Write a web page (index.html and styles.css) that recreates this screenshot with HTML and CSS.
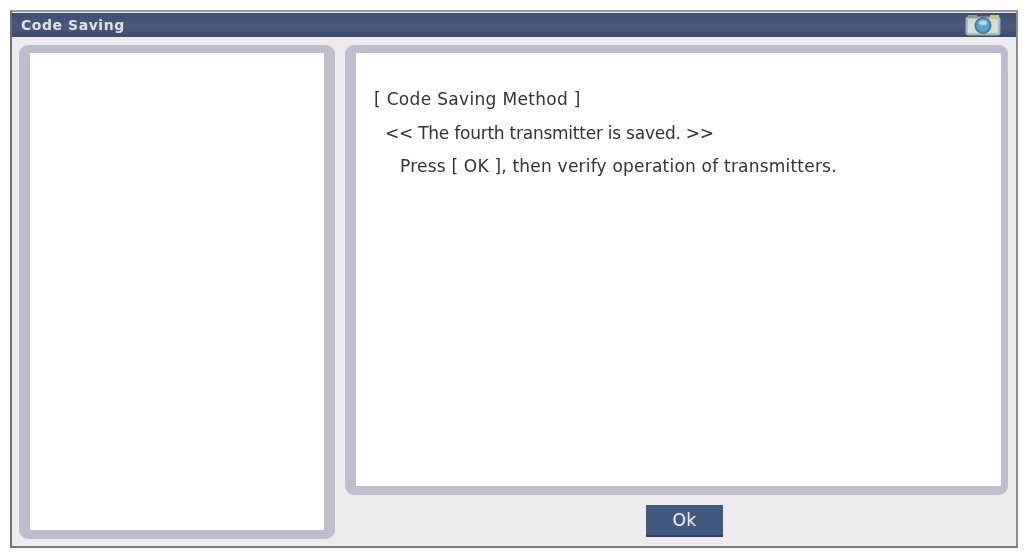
FILE: index.html
```html
<!DOCTYPE html>
<html lang="en">
<head>
<meta charset="utf-8">
<title>Code Saving</title>
<link rel="stylesheet" href="styles.css">
</head>
<body>
<div class="window">
  <header class="titlebar">
    <span class="title">Code Saving</span>
    <svg class="camera" width="36" height="22" viewBox="0 0 36 22" aria-hidden="true">
      <rect x="1" y="3" width="34" height="18" rx="2" fill="#aebfc0" stroke="#9aa8b8"/>
      <rect x="3" y="1" width="9" height="3" fill="#8c9c98"/>
      <rect x="25" y="1" width="9" height="3" fill="#c9c96a"/>
      <rect x="3" y="5" width="30" height="14" rx="1" fill="#cfe0d8"/>
      <circle cx="18" cy="11.5" r="8" fill="#5d7f9c" stroke="#56677f"/>
      <circle cx="18" cy="11.5" r="6.5" fill="#56a6d2"/>
      <ellipse cx="18" cy="9" rx="4" ry="2.4" fill="#a9d8ec"/>
    </svg>
  </header>
  <div class="content">
    <section class="panel panel-left"></section>
    <div class="right">
      <section class="panel panel-right">
        <p class="line line-1">[ Code Saving Method ]</p>
        <p class="line line-2">&lt;&lt; The fourth transmitter is saved. &gt;&gt;</p>
        <p class="line line-3">Press [ OK ], then verify operation of transmitters.</p>
      </section>
      <div class="actions">
        <button class="ok" type="button">Ok</button>
      </div>
    </div>
  </div>
</div>
</body>
</html>
```

FILE: styles.css
```css
* {
  box-sizing: border-box;
}

html,
body {
  margin: 0;
  height: 100%;
  background: #fff;
  overflow: hidden;
}

body {
  padding: 10px;
  font-family: "DejaVu Sans", "Liberation Sans", sans-serif;
}

.window {
  width: 1008px;
  height: 538px;
  display: flex;
  flex-direction: column;
  background: #edebed;
  border: 2px solid #8a8a8c;
  border-left-color: #6e6e70;
  border-top-color: #9a9a9c;
  border-bottom-color: #77777a;
}

.titlebar {
  height: 24px;
  margin-top: 1px;
  flex: none;
  display: flex;
  align-items: center;
  justify-content: space-between;
  padding: 0 15px 0 9px;
  background: linear-gradient(#3d4d72, #4b5a7e 55%, #3c4a6c);
}

.title {
  color: #e2e2e2;
  font-family: "DejaVu Sans", sans-serif;
  font-size: 14px;
  font-weight: 700;
  letter-spacing: 0.55px;
  filter: blur(0.45px);
}

.camera {
  display: block;
  filter: blur(0.4px);
}

.content {
  flex: 1;
  min-height: 0;
  display: flex;
  gap: 10px;
  padding: 8px 8px 7px 7px;
}

.panel {
  background: #fff;
  border-style: solid;
  border-color: #bdbdcb;
  border-radius: 9px;
}

.panel-left {
  width: 316px;
  flex: none;
  border-width: 8px 11px 9px 11px;
}

.right {
  flex: 1;
  min-width: 0;
  display: flex;
  flex-direction: column;
}

.panel-right {
  height: 450px;
  flex: none;
  border-width: 8px 7px 9px 11px;
  padding: 38px 0 0 18px;
}

.line {
  margin: 0;
  color: #333;
  font-size: 17px;
  line-height: 17px;
  white-space: nowrap;
  filter: blur(0.5px);
}

.line-1 {
  letter-spacing: 0.32px;
}

.line-2 {
  margin-top: 17px;
  padding-left: 11px;
  letter-spacing: -0.24px;
}

.line-3 {
  margin-top: 16px;
  padding-left: 26px;
  letter-spacing: 0.21px;
}

.actions {
  flex: 1;
  display: flex;
  justify-content: center;
  align-items: flex-start;
  padding: 10px 0 0 16px;
}

.ok {
  width: 77px;
  height: 32px;
  padding: 0;
  border: 0;
  border-bottom: 2px solid #33415f;
  background: #3f5a7e;
  color: #f0f0f0;
  font-family: "DejaVu Sans", sans-serif;
  font-size: 17px;
  letter-spacing: 0.5px;
}
```
